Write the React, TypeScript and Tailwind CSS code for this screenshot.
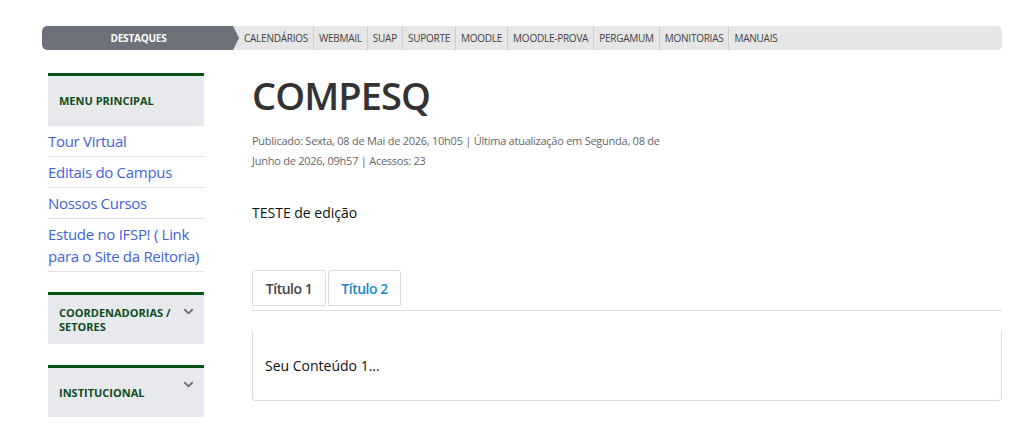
import React from 'react';
import { ChevronDown } from 'lucide-react';

const navLinks = ['CALENDÁRIOS', 'WEBMAIL', 'SUAP', 'SUPORTE', 'MOODLE', 'MOODLE-PROVA', 'PERGAMUM', 'MONITORIAS', 'MANUAIS'];

const menuLinks = ['Tour Virtual', 'Editais do Campus', 'Nossos Cursos', 'Estude no IFSP! ( Link para o Site da Reitoria)'];

function SideBox({ title, chevron, tall }: { title: React.ReactNode; chevron?: boolean; tall?: boolean }) {
  return (
    <div className={`border-t-[3px] border-[#0b5215] bg-[#e8e9ec] ${tall ? 'h-[53px]' : 'h-[52px]'} pl-[11px] pr-[8px] flex items-center justify-between`}>
      <span className="text-[11px] font-bold text-[#0b4d1e] leading-[14px] uppercase">{title}</span>
      {chevron && <ChevronDown className="w-[15px] h-[15px] text-[#6b6f76] self-start mt-[9px]" strokeWidth={3} />}
    </div>
  );
}

export default function App() {
  return (
    <div className="min-h-screen bg-white pt-[26px] px-[42px]" style={{ fontFamily: '"Open Sans", "Liberation Sans", sans-serif' }}>
      {/* barra de destaques */}
      <div className="flex h-6 w-[960px] bg-[#e6e6e6] rounded-[5px] overflow-hidden">
        <div className="relative w-[191px] bg-[#6c717a] rounded-l-[5px] flex items-center justify-center">
          <span className="text-[10px] font-bold text-white ml-[2px] tracking-[-0.2px]">DESTAQUES</span>
          <div className="absolute right-[-6px] top-0 w-0 h-0 border-y-[12px] border-y-transparent border-l-[6px] border-l-[#6c717a]" />
        </div>
        <div className="flex items-center pl-[6px]">
          {navLinks.map((l, i) => (
            <span key={l} className={`text-[10px] tracking-[-0.25px] text-[#444] px-[5px] leading-6 ${i < navLinks.length - 1 ? 'border-r border-[#cfcfcf]' : ''}`}>{l}</span>
          ))}
        </div>
      </div>

      <div className="flex w-[960px] mt-[23px]">
        {/* menu lateral */}
        <aside className="w-[156px] ml-[6px] shrink-0">
          <SideBox title="Menu Principal" tall />
          <ul>
            {menuLinks.map((l) => (
              <li key={l} className="border-b border-[#e2e2e2] py-[4px] text-[15px] leading-[22px] tracking-[-0.3px] text-[#3f64d8]">{l}</li>
            ))}
          </ul>
          <div className="mt-[20px]">
            <SideBox title={<>Coordenadorias /<br />Setores</>} chevron />
          </div>
          <div className="mt-[21px]">
            <SideBox title="Institucional" chevron />
          </div>
        </aside>

        {/* conteúdo */}
        <main className="ml-[48px] flex-1">
          <h1 className="text-[38px] font-semibold text-[#333] leading-[44px] tracking-[-0.9px]">COMPESQ</h1>
          <p className="mt-[14px] max-w-[420px] text-[11px] leading-5 text-[#666] tracking-[-0.25px]">
            Publicado: Sexta, 08 de Mai de 2026, 10h05 | Última atualização em Segunda, 08 de Junho de 2026, 09h57 | Acessos: 23
          </p>
          <p className="mt-[31px] text-[14px] text-[#111]">TESTE de edição</p>

          <div className="mt-[47px] flex gap-[2px] border-b border-[#dcdcdc] pb-[4px]">
            <div className="h-9 w-[74px] justify-center border border-[#dcdcdc] rounded-t-[3px] flex items-center text-[14px] font-semibold text-[#444] tracking-[-0.5px]">Título 1</div>
            <div className="h-9 w-[73px] justify-center border border-[#dcdcdc] rounded-t-[3px] flex items-center text-[14px] font-semibold text-[#1a87c9] tracking-[-0.5px]">Título 2</div>
          </div>

          <div className="mt-[20px] h-[70px] border-x border-b border-[#dcdcdc] rounded-b-[4px] flex items-center px-3 text-[14px] text-[#111]">
            Seu Conteúdo 1...
          </div>
        </main>
      </div>
    </div>
  );
}
